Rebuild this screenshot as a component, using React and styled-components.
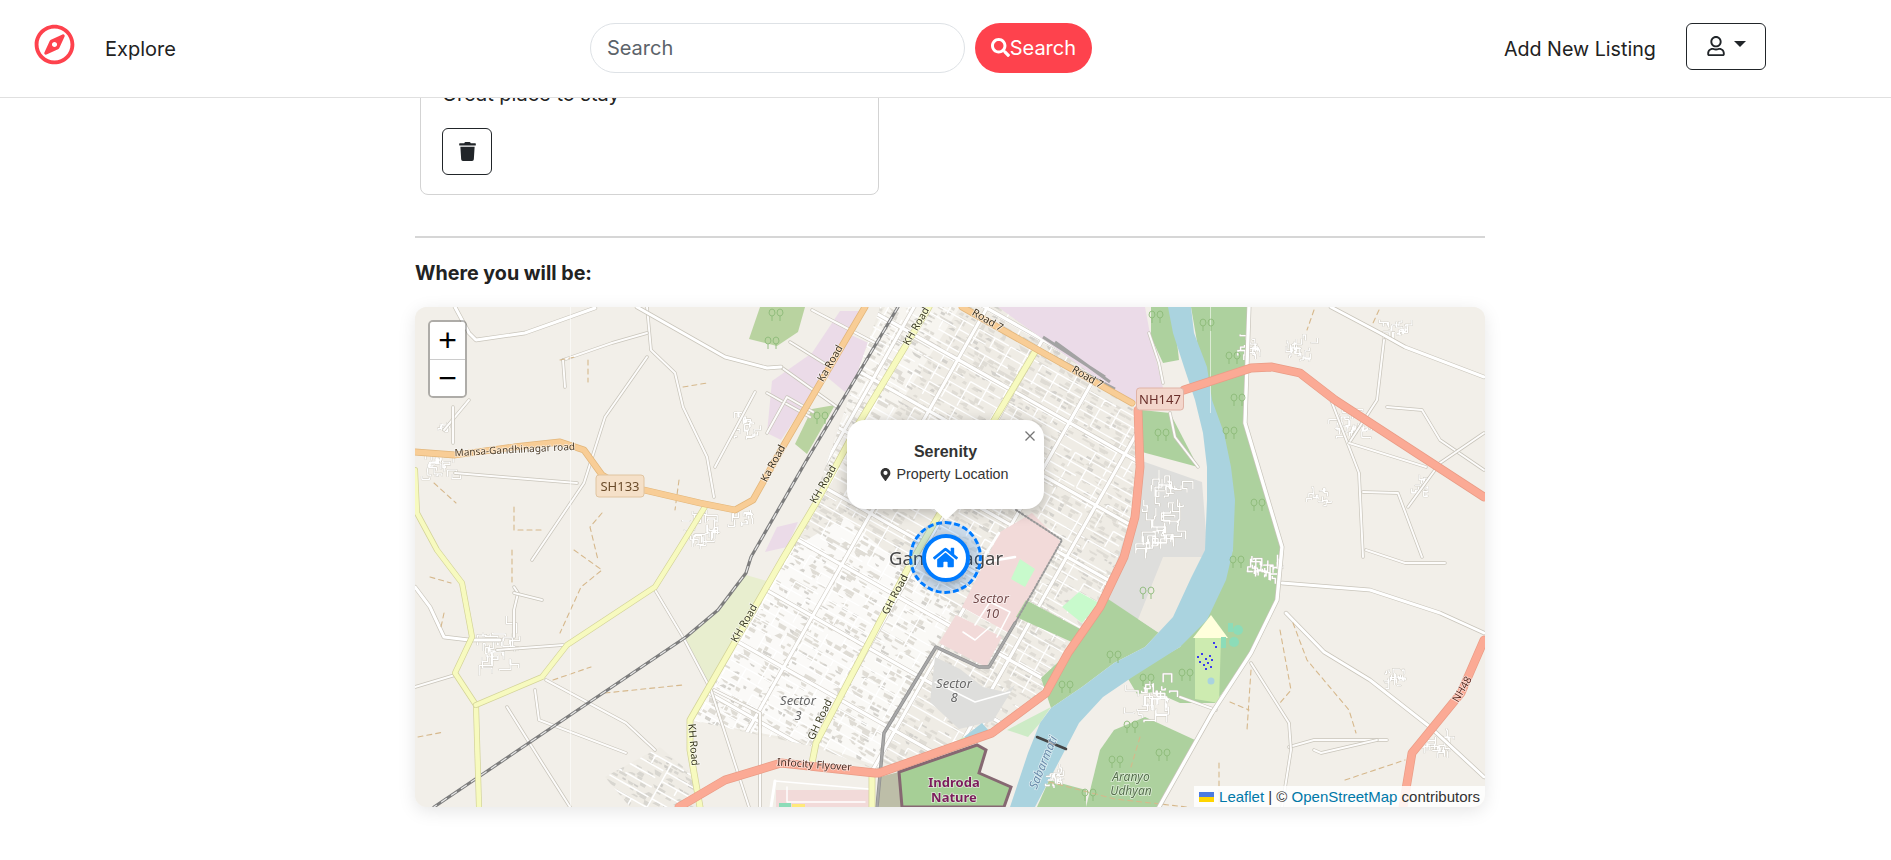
import React from 'react'
import styled, { createGlobalStyle } from 'styled-components'
import { FaRegCompass, FaSearch, FaRegUser, FaTrash, FaHome, FaMapMarkerAlt } from 'react-icons/fa'

const GlobalStyle = createGlobalStyle`
html, body { margin:0; padding:0; height:860px; overflow:hidden; background:#fff; }
body { font-family:"Inter","Noto Sans",sans-serif; color:#222; }
`

const Nav = styled.header`
position:relative;
z-index:10;
height:97px;
background:#fff;
border-bottom:1px solid #e0e0e0;
display:flex;
align-items:center;
padding-left:34px;
`
const Logo = styled.span`
display:flex;
color:#fe424d;
font-size:41px;
margin-top:-8px;
`
const NavLink = styled.a`
font-size:${p => p.$size || 20}px;
color:#222;
white-space:nowrap;
margin-top:1px;
`
const ExploreLink = styled(NavLink)`
margin-left:30px;
`
const SearchForm = styled.form`
display:flex;
gap:10px;
margin:-2px 0 0 414px;
`
const SearchInput = styled.div`
box-sizing:border-box;
width:375px;
height:50px;
border:1px solid #dee2e6;
border-radius:25px;
padding-left:16px;
display:flex;
align-items:center;
font-size:20px;
color:#5c636a;
`
const SearchButton = styled.button`
width:117px;
height:50px;
border:0;
border-radius:25px;
background:#fe424d;
color:#fff;
font:inherit;
font-size:20px;
display:flex;
align-items:center;
justify-content:center;
padding:0;
`
const NavRight = styled.div`
display:flex;
align-items:center;
gap:30px;
margin-left:412px;
`
const UserButton = styled.button`
box-sizing:border-box;
width:80px;
height:47px;
border:1px solid #212529;
border-radius:6px;
background:#fff;
color:#212529;
display:flex;
align-items:center;
justify-content:center;
gap:8px;
padding:0;
margin-top:-5px;
`
const Caret = styled.span`
width:0;
height:0;
border-top:6px solid #212529;
border-left:6px solid transparent;
border-right:6px solid transparent;
margin-top:-4px;
`
const Main = styled.main`
width:1070px;
margin-left:415px;
`
const ReviewCard = styled.section`
box-sizing:border-box;
width:459px;
margin:-25px 0 0 5px;
padding:6px 21px 19px;
border:1px solid #d3d3d3;
border-radius:8px;
`
const ReviewText = styled.p`
margin:0 0 19px;
font-size:20px;
line-height:29px;
`
const DeleteButton = styled.button`
box-sizing:border-box;
width:50px;
height:47px;
border:1px solid #212529;
border-radius:6px;
background:#fff;
color:#212529;
display:flex;
align-items:center;
justify-content:center;
padding:0;
`
const Divider = styled.hr`
margin:41px 0 0;
border:0;
border-top:2px solid #d6d6d6;
`
const Heading = styled.h3`
margin:21px 0 20px;
font-size:19.7px;
line-height:28px;
font-weight:700;
`
const MapFrame = styled.div`
position:relative;
height:500px;
border-radius:12px;
overflow:hidden;
background:#f2efe9;
`
const MapShadow = styled.div`
border-radius:12px;
box-shadow:0 4px 18px rgba(0,0,0,.1);
`
const MapSvg = styled.svg`
display:block;
width:100%;
height:100%;
`
const ZoomBar = styled.div`
position:absolute;
left:13px;
top:13px;
width:39px;
border:2px solid rgba(0,0,0,.28);
border-radius:5px;
box-sizing:border-box;
background-clip:padding-box;
overflow:hidden;
`
const ZoomButton = styled.div`
height:${p => p.$h}px;
background:#fff;
color:#000;
display:flex;
align-items:center;
justify-content:center;
font:32px "Liberation Sans",Arial,sans-serif;
border-bottom:${p => (p.$sep ? '1px solid #ccc' : '0')};
`
const Attribution = styled.div`
position:absolute;
right:0;
bottom:0;
height:21px;
padding:0 5px;
background:rgba(255,255,255,.85);
display:flex;
align-items:center;
font:15px "Liberation Sans",Arial,sans-serif;
color:#333;
white-space:pre;
`
const AttrLink = styled.a`
color:#0078a8;
`
const Flag = styled.svg`
width:15px;
height:10px;
margin-right:5px;
`
const Popup = styled.div`
position:absolute;
left:432px;
top:113px;
box-sizing:border-box;
width:197px;
height:89px;
padding-top:22px;
background:#fff;
border-radius:18px;
box-shadow:0 3px 14px rgba(0,0,0,.25);
text-align:center;
font-family:"Liberation Sans",Arial,sans-serif;
color:#333;
&::after {
  content:"";
  position:absolute;
  left:50%;
  bottom:-11px;
  margin-left:-13px;
  border-top:12px solid #fff;
  border-left:13px solid transparent;
  border-right:13px solid transparent;
}
`
const PopupClose = styled.svg`
position:absolute;
top:11px;
right:9px;
width:10px;
height:10px;
`
const PopupTitle = styled.div`
font-size:16px;
font-weight:700;
line-height:20px;
`
const PopupLine = styled.div`
font-size:14.3px;
line-height:20px;
margin:2px 0 0 -3px;
display:flex;
align-items:center;
justify-content:center;
gap:4px;
`
const PinRing = styled.div`
position:absolute;
left:494px;
top:214px;
box-sizing:border-box;
width:73px;
height:73px;
border:3px dashed #007bff;
border-radius:50%;
background:rgba(0,123,255,.15);
display:flex;
align-items:center;
justify-content:center;
`
const PinDisc = styled.div`
box-sizing:border-box;
width:48px;
height:48px;
border:4px solid #007bff;
border-radius:50%;
background:#fff;
color:#007bff;
display:flex;
align-items:center;
justify-content:center;
font-size:25px;
box-shadow:0 2px 8px rgba(0,0,0,.25);
`

// seeded so the map stays the same between runs
const makeRandom = seed => () => {
  seed = (seed * 16807) % 2147483647
  return seed / 2147483647
}

const CITY = '465,0 583,0 722,100 722,210 690,290 630,385 577,425 464,464 400,440 275,413 300,370 367,253 400,190'
const SOUTH_BLOCK = '190,470 245,440 280,470 288,500 215,500'
const EAST_BLOCK = '727,154 787,175 793,250 765,340 690,290 716,210'

const buildCity = () => {
  const rnd = makeRandom(4711)
  let grey = ''
  let dark = ''
  let thin = ''
  for (let u = -380; u < 380; u += 6) {
    for (let v = -380; v < 380; v += 4.5) {
      const r = rnd()
      if (r < 0.3) grey += `M${u} ${v}h${(3 + rnd() * 6).toFixed(1)}v${(1.5 + rnd() * 3).toFixed(1)}h-${(3 + rnd() * 6).toFixed(1)}z`
      else if (r < 0.4) dark += `M${u} ${v}h${(2 + rnd() * 5).toFixed(1)}v${(1.5 + rnd() * 2).toFixed(1)}h-${(2 + rnd() * 5).toFixed(1)}z`
    }
  }
  for (let v = -380; v < 380; v += 10) {
    for (let u = -380; u < 380; u += 18) {
      if (rnd() < 0.75) thin += `M${u} ${v}h${(12 + rnd() * 24).toFixed(1)}`
      if (rnd() < 0.55) thin += `M${u} ${v}v${(6 + rnd() * 12).toFixed(1)}`
    }
  }
  let main = ''
  for (let v = -370; v < 380; v += 59) main += `M-400 ${v}H400`
  for (let u = -380; u < 380; u += 64) main += `M${u} -400V400`
  return { grey, dark, thin, main }
}
const city = buildCity()

// short connected lanes going out from a middle point
const buildVillage = (cx, cy, r, seed) => {
  const rnd = makeRandom(seed)
  let d = ''
  for (let i = 0; i < r * 0.9; i++) {
    let x = cx + (rnd() - 0.5) * r * 1.2
    let y = cy + (rnd() - 0.5) * r
    d += `M${x.toFixed(1)} ${y.toFixed(1)}`
    for (let s = 0; s < 3; s++) {
      if (s % 2) x += (rnd() - 0.5) * r * 0.9
      else y += (rnd() - 0.5) * r * 0.7
      d += `L${x.toFixed(1)} ${y.toFixed(1)}`
    }
  }
  return d
}
const VILLAGES = [
  [26, 160, 22], [85, 340, 30], [29, 120, 10], [737, 390, 30], [850, 262, 24], [980, 373, 16], [1022, 440, 22],
  [983, 22, 18], [839, 40, 16], [885, 42, 20], [935, 120, 24], [1005, 180, 14], [905, 190, 14],
  [750, 190, 30], [745, 225, 30], [640, 470, 16], [330, 120, 18], [290, 225, 26], [328, 210, 16],
].map((v, i) => buildVillage(v[0], v[1], v[2], 97 + i * 31)).join('')

const MAJOR = [
  '40,0 54,26 61,33 110,26 141,15 180,1',
  '222,0 310,50 352,61 366,60',
  '0,280 15,300 29,330 54,333 85,333',
  '867,276 955,283 1025,306 1069,326',
  '871,306 909,345 955,373 1015,420 1069,470',
  '916,0 965,26 990,40 1069,70',
]
const RURAL = [
  '232,0 236,43 260,66 268,100 292,150 299,190',
  '148,53 197,36 232,26',
  '148,53 150,80',
  '232,50 190,110 169,176 117,253',
  '40,166 162,176',
  '29,123 54,93',
  '38,100 38,136',
  '82,343 148,338',
  '0,380 40,368',
  '92,400 127,456 155,500',
  '120,383 124,413 211,446',
  '131,373 211,416 240,443',
  '240,283 268,330 296,383 334,500',
  '299,383 345,406 345,500',
  '99,280 103,286 99,303 99,330',
  '99,286 127,293',
  '874,440 899,433 972,433',
  '836,356 874,416 876,443 867,500',
  '969,33 962,93 934,136',
  '916,93 944,166 948,250',
  '948,185 983,186 1007,250',
  '934,136 1011,160',
  '972,100 1007,103 1025,133 1069,163',
  '1069,126 1025,156 993,200',
  '951,243 990,256 1030,256',
  '755,106 760,130 783,160',
  '765,390 801,403',
  '734,26 744,56 748,76',
  '899,443 906,446 962,433',
  '366,60 422,100',
  '397,3 460,36',
  '352,86 395,110',
  '375,35 412,58',
  '352,126 372,90 398,105',
  '340,85 300,160',
]
const DUST = [
  '865,323 876,383 865,396',
  '878,316 892,353 934,403 941,426',
  '836,363 832,423',
  '815,395 834,403',
  '930,473 990,453',
  '804,456 804,500',
  '634,475 700,492 772,500',
  '725,430 716,460',
  '145,53 160,50',
  '173,53 173,75',
  '268,80 292,76',
  '99,200 99,223 129,223',
  '187,206 175,220 183,253',
  '19,176 41,196',
  '264,173 260,203',
  '97,243 97,276',
  '159,243 187,263 166,280 145,326',
  '15,270 36,276',
  '29,306 26,320',
  '138,373 176,360',
  '190,386 268,378',
  '3,430 29,425',
  '899,3 892,23',
  '964,3 958,16',
]
const TREES = [
  [792, 18], [818, 51], [823, 93], [815, 126], [843, 198], [747, 128], [741, 10], [732, 286], [699, 350], [651, 380],
  [732, 373], [771, 368], [822, 255], [716, 420], [701, 455], [748, 448], [674, 488], [361, 8], [357, 36], [406, 111],
]
const LABELS = [
  ['Mansa-Gandhinagar road', 100, 143, -3, 10, '#4a3a26'],
  ['Ka Road', 418, 55, -60, 10.5, '#3d3220'],
  ['Ka Road', 361, 155, -62, 10.5, '#3d3220'],
  ['KH Road', 504, 18, -60, 10.5, '#3a3a20'],
  ['KH Road', 411, 176, -60, 10.5, '#3a3a20'],
  ['KH Road', 332, 315, -60, 10.5, '#3a3a20'],
  ['KH Road', 275, 435, 85, 10.5, '#3a3a20'],
  ['GH Road', 483, 286, -62, 10.5, '#3a3a20'],
  ['GH Road', 408, 411, -65, 10.5, '#3a3a20'],
  ['Road 7', 571, 13, 30, 10.5, '#3d3220'],
  ['Road 7', 671, 70, 30, 10.5, '#3d3220'],
  ['NH48', 1050, 381, -60, 10.5, '#5a2a20'],
  ['Infocity Flyover', 399, 458, 4, 10.5, '#4a2a20'],
]

const Poly = ({ points, fill }) => <polygon points={points} fill={fill} />
const Way = ({ points, color, width, dash }) => (
  <polyline points={points} fill="none" stroke={color} strokeWidth={width} strokeLinejoin="round" strokeLinecap="round" strokeDasharray={dash} />
)
const CasedWay = ({ points, casing, color, width }) => (
  <>
    <Way points={points} color={casing} width={width + 1.4} />
    <Way points={points} color={color} width={width} />
  </>
)
const Shield = ({ x, y, w, h, fill, stroke, color, children }) => (
  <g>
    <rect x={x - w / 2} y={y - h / 2} width={w} height={h} rx="3" fill={fill} stroke={stroke} strokeWidth="1" />
    <text x={x} y={y + 4.5} textAnchor="middle" fontSize="13" fill={color}>{children}</text>
  </g>
)
const Place = ({ x, y, size, color, style, weight, rotate, children }) => (
  <text
    x={x}
    y={y}
    textAnchor="middle"
    fontSize={size}
    fill={color}
    fontStyle={style}
    fontWeight={weight}
    stroke="#fff"
    strokeOpacity=".6"
    strokeWidth="1.6"
    paintOrder="stroke"
    transform={rotate ? `rotate(${rotate} ${x} ${y})` : undefined}
  >
    {children}
  </text>
)
const Facility = () => (
  <g>
    <Poly points="780,331 806,331 804,396 780,392" fill="#cdebb0" />
    <Poly points="778,331 796,308 813,331" fill="#ffffdc" />
    <circle cx="823" cy="323" r="5" fill="#8cdcb8" />
    <circle cx="819" cy="335" r="5" fill="#8cdcb8" />
    <rect x="813" y="316" width="5" height="9" fill="#8cdcb8" />
    <rect x="806" y="330" width="5" height="11" fill="#8cdcb8" />
    <circle cx="796" cy="374" r="3.5" fill="#aad3df" />
    <path d="M782 350h2M786 347h2M790 352h2M794 349h2M784 355h2M788 358h2M792 356h2M796 353h2M790 362h2M795 360h2M800 340h2M798 336h2" stroke="#3a3af0" strokeWidth="2" />
  </g>
)

// the tile layer: drawn by hand from the reference, details filled in from the seeded generator
const MapDrawing = () => (
  <MapSvg viewBox="0 0 1070 500" fontFamily="'Noto Sans',sans-serif">
    <defs>
      <filter id="soft" x="0" y="0" width="100%" height="100%">
        <feGaussianBlur stdDeviation=".45" />
      </filter>
      <clipPath id="cityClip"><polygon points={CITY} /></clipPath>
      <clipPath id="southClip"><polygon points={SOUTH_BLOCK} /></clipPath>
      <clipPath id="eastClip"><polygon points={EAST_BLOCK} /></clipPath>
    </defs>
    <g filter="url(#soft)">
      <rect width="1070" height="500" fill="#f2efe9" />

      <Poly points="240,282 268,331 303,304 331,268 355,275 296,383" fill="#e8eecf" />
      <Poly points="345,0 390,0 383,25 362,39 334,32" fill="#b9d3a0" />
      <Poly points="397,102 420,98 392,147 380,137" fill="#b9d3a0" />
      <Poly points="357,74 397,46 425,4 446,4 394,91 366,133 352,126" fill="#ebdbe8" />
      <Poly points="436,28 460,39 430,85 412,70" fill="#ebdbe8" />
      <Poly points="583,0 730,0 736,32 748,81 716,98 618,39" fill="#ebdbe8" />
      <Poly points="362,220 350,245 372,240 383,215" fill="#ebdbe8" />

      <g clipPath="url(#cityClip)">
        <rect width="1070" height="500" fill="#efece5" />
        <Poly points="375,243 275,413 400,436 492,263 430,210" fill="#fbfaf8" />
        <Poly points="492,263 400,436 464,460 521,340 540,300" fill="#faf9f6" />
        <Poly points="470,0 545,0 440,170 395,150" fill="#f7f5f0" />
        <g transform="translate(500,250) rotate(29.5)">
          <path d={city.grey} fill="#dfdcd5" />
          <path d={city.dark} fill="#d3d1cc" />
          <path d={city.thin} stroke="#fff" strokeWidth="1.3" fill="none" />
          <path d={city.main} stroke="#d2cec6" strokeWidth="4.4" fill="none" />
          <path d={city.main} stroke="#fff" strokeWidth="3.2" fill="none" />
        </g>
      </g>
      <g clipPath="url(#southClip)">
        <rect width="1070" height="500" fill="#efece5" />
        <g transform="translate(500,250) rotate(29.5)">
          <path d={city.dark} fill="#cfcdc8" />
          <path d={city.grey} fill="#d8d6d0" />
          <path d={city.thin} stroke="#fff" strokeWidth="1.5" fill="none" />
        </g>
      </g>

      <Poly points="585,225 617,206 646,235 594,326 547,300" fill="#f2dad9" />
      <Poly points="541,308 587,330 571,360 524,336" fill="#f2dad9" />
      <Way points="560,318 575,295 595,305 582,330" color="#fff" width="1.6" />
      <Way points="548,325 560,333 575,320" color="#fff" width="1.6" />
      <Way points="584,226 565,256 600,250" color="#fff" width="2.6" />
      <Poly points="605,252 620,262 610,280 596,272" fill="#c8facc" />
      <Poly points="611,293 667,323 659,336 601,310" fill="#add19e" />
      <Poly points="647,300 664,285 684,296 667,316" fill="#c8facc" />
      <Poly points="520,350 545,362 568,380 590,385 600,378 578,414 544,422 515,395" fill="#dededc" />
      <Way points="520,375 560,395 595,385" color="#fff" width="1.5" />
      <Poly points="549,430 567,416 575,425 556,438" fill="#aad3df" />
      <Poly points="531,440 549,430 556,438 534,446" fill="#c8facc" />

      <Poly points="776,0 834,0 830,116 867,240 862,290 836,346 800,396 765,396 740,385 722,387 712,370 765,340 818,243" fill="#add19e" />
      <Poly points="709,266 737,256 776,273 758,310 730,340 699,356 667,380 636,401 626,371 653,346 685,305" fill="#add19e" />
      <Poly points="736,0 758,0 764,53 748,56 736,30" fill="#add19e" />
      <Poly points="727,103 755,106 783,160 727,145" fill="#add19e" />
      <Poly points="592,423 636,400 625,416 613,430" fill="#cdebc6" />
      <Poly points="699,423 730,410 780,433 744,500 671,500 685,443" fill="#add19e" />
      <Poly points="622,500 634,473 671,483 671,500" fill="#add19e" />

      <polygon points={EAST_BLOCK} fill="#dededc" />
      <g clipPath="url(#eastClip)"><Poly points="748,250 793,250 765,340 720,320" fill="#eeeae2" /></g>
      <Poly points="753,0 758,26 769,60 780,93 788,126 792,160 792,193 790,243 776,271 758,310 730,340 699,356 667,380 636,401 625,416 613,446 595,500 620,500 650,443 664,416 688,390 716,371 765,340 792,313 811,273 818,243 820,193 816,160 809,126 797,93 792,60 779,26 776,0" fill="#aad3df" />

      <Facility />

      <Poly points="361,483 454,483 454,500 361,500" fill="#f2dad9" />
      <Poly points="364,496 376,496 376,500 364,500" fill="#8cdcb8" />
      <Poly points="377,497 390,497 390,500 377,500" fill="#ffe97a" />
      <Poly points="464,470 484,465 487,500 464,500" fill="#bdbea8" />
      <polygon points="484,465 562,438 571,443 564,466 596,480 589,500 487,500" fill="#a6cf96" stroke="#866872" strokeWidth="3" />
      <Way points="360,474 356,500" color="#fff" width="3" />
      <Way points="360,474 454,482" color="#fff" width="1.4" />
      <Way points="372,480 372,495 450,495" color="#fff" width="1.4" />

      <path d={VILLAGES} stroke="#c6c2b8" strokeWidth="2" fill="none" strokeLinejoin="round" />
      <path d={VILLAGES} stroke="#fff" strokeWidth="1.3" fill="none" strokeLinejoin="round" />
      {RURAL.map(p => <CasedWay key={p} points={p} casing="#c9c5bb" color="#fdfcfb" width={2} />)}
      {MAJOR.map(p => <CasedWay key={p} points={p} casing="#c9c5bb" color="#fff" width={3} />)}
      {DUST.map(p => <Way key={p} points={p} color="#d6b88c" width={1.1} dash="5 4" />)}
      <CasedWay points="834,0 830,116 867,240 862,293 836,346 797,406 744,500" casing="#c9c5bb" color="#fff" width={3.4} />

      <line x1="155.5" y1="0" x2="155.5" y2="500" stroke="#fff" strokeOpacity=".7" strokeWidth=".8" />
      <line x1="795.5" y1="0" x2="795.5" y2="106" stroke="#fff" strokeOpacity=".7" strokeWidth=".8" />

      <Way points="483,0 390,156 336,250 331,266 303,303 271,330 19,500" color="#7d7d7d" width={3.2} />
      <Way points="483,0 390,156 336,250 331,266 303,303 271,330 19,500" color="#e8e8e8" width={1.2} dash="6 6" />
      <Way points="601,203 647,233 634,256 600,316" color="#999" width={2} dash="1.5 2" />
      <CasedWay points="600,316 574,360 564,360 521,340 469,426 462,500" casing="#8f8f8f" color="#a8a8a8" width={2} />
      <path d="M618 39 L700 82 M628 30 L690 70 M640 35 L695 75" stroke="#a3a3a3" strokeWidth="3" fill="none" />

      <CasedWay points="0,163 2,206 22,243 47,276 57,330 40,366 61,398 64,500" casing="#d3d398" color="#f7fabf" width={4.6} />
      <CasedWay points="61,398 127,370 152,338 240,280 262,245 291,198" casing="#d3d398" color="#f7fabf" width={4.6} />
      <CasedWay points="514,0 444,116 401,196 367,253 275,413 275,443 285,500" casing="#d3d398" color="#f7fabf" width={5.4} />
      <CasedWay points="621,43 581,110 492,263 401,436 397,456" casing="#d3d398" color="#f7fabf" width={5.4} />
      <CasedWay points="457,470 457,500" casing="#d3d398" color="#f7fabf" width={5.4} />

      <CasedWay points="0,145 40,148 99,140 145,135 169,143 187,168 205,179 229,183 285,196 320,203 338,193 366,143 397,90 450,0" casing="#e3b67a" color="#f8cd96" width={5.4} />
      <CasedWay points="547,0 717,96" casing="#e3b67a" color="#f8cd96" width={5.4} />

      <CasedWay points="723,103 725,160 720,210 709,250 685,300 653,346 631,386 577,426 464,466 460,466 366,456 310,473 264,500" casing="#ea9c86" color="#fbaa95" width={7.4} />
      <CasedWay points="769,83 836,61 857,60 885,66 920,93 1069,190" casing="#ea9c86" color="#fbaa95" width={7.4} />
      <CasedWay points="1069,333 1046,386 997,446 988,500" casing="#ea9c86" color="#fbaa95" width={7.4} />
      <Way points="622,430 651,442" color="#444" width={2.6} />

      {TREES.map(([x, y]) => (
        <path key={`${x}-${y}`} d={`M${x - 4} ${y + 6}v-5m-3 -3a3 4 0 1 1 6 0a3 4 0 0 1 -3 3a3 4 0 0 1 -3 -3M${x + 4} ${y + 6}v-5m-3 -3a3 4 0 1 1 6 0a3 4 0 0 1 -3 3a3 4 0 0 1 -3 -3`} stroke="#8cba78" strokeWidth=".9" fill="none" />
      ))}

      <Shield x={205} y={179} w={48} h={22} fill="#f5e0c8" stroke="#e0c4a0" color="#6b4c2a">SH133</Shield>
      <Shield x={745} y={92} w={47} h={22} fill="#f3d6cc" stroke="#e0b3a6" color="#6a2f2a">NH147</Shield>

      {LABELS.map(([text, x, y, rotate, size, color]) => (
        <Place key={`${text}-${x}`} x={x} y={y + 3} rotate={rotate} size={size} color={color}>{text}</Place>
      ))}
      <Place x={531} y={258} size={18.5} color="#444">Gandhinagar</Place>
      <Place x={576} y={296} size={13} style="italic" color="#734a4a">Sector</Place>
      <Place x={577} y={311} size={13} style="italic" color="#734a4a">10</Place>
      <Place x={539} y={381} size={13} style="italic" color="#666">Sector</Place>
      <Place x={539} y={395} size={13} style="italic" color="#666">8</Place>
      <Place x={383} y={398} size={13} style="italic" color="#666">Sector</Place>
      <Place x={383} y={413} size={13} style="italic" color="#666">3</Place>
      <Place x={539} y={480} size={13} weight="700" color="#7c1f5c">Indroda</Place>
      <Place x={539} y={495} size={13} weight="700" color="#7c1f5c">Nature</Place>
      <Place x={632} y={457} size={12} style="italic" color="#6a8cab" rotate={-68}>Sabarmati</Place>
      <Place x={716} y={474} size={12} style="italic" color="#55704c">Aranyo</Place>
      <Place x={716} y={488} size={12} style="italic" color="#55704c">Udhyan</Place>
    </g>
  </MapSvg>
)

const App = () => (
  <>
    <GlobalStyle />
    <Nav>
      <Logo><FaRegCompass /></Logo>
      <ExploreLink>Explore</ExploreLink>
      <SearchForm>
        <SearchInput>Search</SearchInput>
        <SearchButton><FaSearch size={19} />Search</SearchButton>
      </SearchForm>
      <NavRight>
        <NavLink $size={19.7}>Add New Listing</NavLink>
        <UserButton><FaRegUser size={20} /><Caret /></UserButton>
      </NavRight>
    </Nav>
    <Main>
      <ReviewCard>
        <ReviewText>Great place to stay</ReviewText>
        <DeleteButton><FaTrash size={19} /></DeleteButton>
      </ReviewCard>
      <Divider />
      <Heading>Where you will be:</Heading>
      <MapShadow>
        <MapFrame>
          <MapDrawing />
          <ZoomBar>
            <ZoomButton $h={37} $sep>+</ZoomButton>
            <ZoomButton $h={36}>−</ZoomButton>
          </ZoomBar>
          <Popup>
            <PopupClose viewBox="0 0 10 10"><path d="M.5 .5L9.5 9.5M9.5 .5L.5 9.5" stroke="#757575" strokeWidth="1.3" /></PopupClose>
            <PopupTitle>Serenity</PopupTitle>
            <PopupLine><FaMapMarkerAlt size={13} />Property Location</PopupLine>
          </Popup>
          <PinRing><PinDisc><FaHome /></PinDisc></PinRing>
          <Attribution>
            <Flag viewBox="0 0 15 10"><rect width="15" height="5" fill="#4c7be1" /><rect y="5" width="15" height="5" fill="#ffd500" /></Flag>
            <span><AttrLink>Leaflet</AttrLink> | © <AttrLink>OpenStreetMap</AttrLink> contributors</span>
          </Attribution>
        </MapFrame>
      </MapShadow>
    </Main>
  </>
)

export default App
